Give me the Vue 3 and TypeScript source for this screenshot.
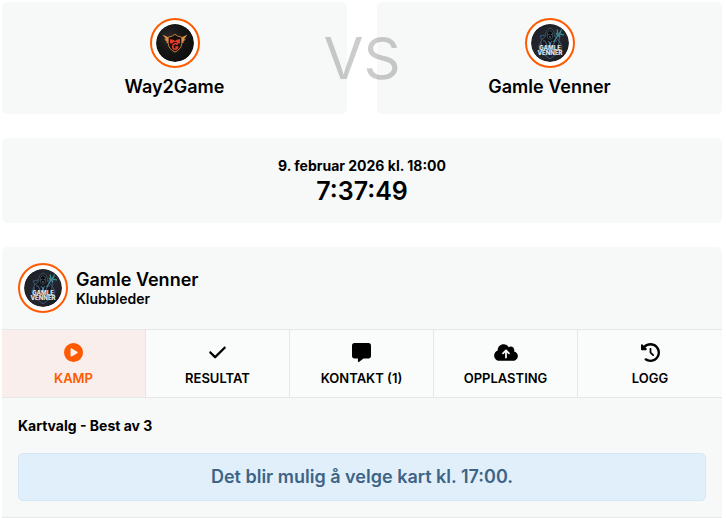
<script setup lang="ts">
import { ref } from 'vue'

interface Team {
  name: string
  logo: 'wings' | 'reaper'
}

interface Tab {
  id: string
  label: string
  viewBox: string
  width: number
  path: string
}

const teams: Team[] = [
  { name: 'Way2Game', logo: 'wings' },
  { name: 'Gamle Venner', logo: 'reaper' },
]

const tabs: Tab[] = [
  {
    id: 'kamp',
    label: 'Kamp',
    viewBox: '0 0 512 512',
    width: 19,
    path: 'M0 256a256 256 0 1 1 512 0A256 256 0 1 1 0 256zM188.3 147.1c-7.6 4.2-12.3 12.3-12.3 20.9V344c0 8.7 4.7 16.7 12.3 20.9s16.8 4.1 24.3-.5l144-88c7.1-4.4 11.5-12.1 11.5-20.5s-4.4-16.1-11.5-20.5l-144-88c-7.4-4.5-16.7-4.7-24.3-.5z',
  },
  {
    id: 'resultat',
    label: 'Resultat',
    viewBox: '0 0 448 512',
    width: 17,
    path: 'M438.6 105.4c12.5 12.5 12.5 32.8 0 45.3l-256 256c-12.5 12.5-32.8 12.5-45.3 0l-128-128c-12.5-12.5-12.5-32.8 0-45.3s32.8-12.5 45.3 0L160 338.7 393.4 105.4c12.5-12.5 32.8-12.5 45.3 0z',
  },
  {
    id: 'kontakt',
    label: 'Kontakt (1)',
    viewBox: '0 0 512 512',
    width: 19,
    path: 'M64 0C28.7 0 0 28.7 0 64V352c0 35.3 28.7 64 64 64h96v80c0 6.1 3.4 11.6 8.8 14.3s11.9 2.1 16.8-1.5L309.3 416H448c35.3 0 64-28.7 64-64V64c0-35.3-28.7-64-64-64H64z',
  },
  {
    id: 'opplasting',
    label: 'Opplasting',
    viewBox: '0 0 640 512',
    width: 24,
    path: 'M144 480C64.5 480 0 415.5 0 336c0-62.8 40.2-116.2 96.2-135.9c-.1-2.7-.2-5.4-.2-8.1c0-88.4 71.6-160 160-160c59.3 0 111 32.2 138.7 80.2C409.9 102 428.3 96 448 96c53 0 96 43 96 96c0 12.2-2.3 23.8-6.4 34.6C596 238.4 640 290.1 640 352c0 70.7-57.3 128-128 128H144zm79-217c-9.4 9.4-9.4 24.6 0 33.9s24.6 9.4 33.9 0l39-39V392c0 13.3 10.7 24 24 24s24-10.7 24-24V257.9l39 39c9.4 9.4 24.6 9.4 33.9 0s9.4-24.6 0-33.9l-80-80c-9.4-9.4-24.6-9.4-33.9 0l-80 80z',
  },
  {
    id: 'logg',
    label: 'Logg',
    viewBox: '0 0 512 512',
    width: 19,
    path: 'M75 75L41 41C25.9 25.9 0 36.6 0 57.9V168c0 13.3 10.7 24 24 24H134.1c21.4 0 32.1-25.9 17-41l-30.8-30.8C155 85.5 203 64 256 64c106 0 192 86 192 192s-86 192-192 192c-40.8 0-78.6-12.7-109.7-34.4c-14.5-10.1-34.4-6.6-44.6 7.9s-6.6 34.4 7.9 44.6C151.2 495 201.7 512 256 512c141.4 0 256-114.6 256-256S397.4 0 256 0C185.3 0 121.3 28.7 75 75zm181 53c-13.3 0-24 10.7-24 24V256c0 6.4 2.5 12.5 7 17l72 72c9.4 9.4 24.6 9.4 33.9 0s9.4-24.6 0-33.9l-65-65V152c0-13.3-10.7-24-24-24z',
  },
]

const activeTab = ref('kamp')
</script>

<template>
  <!-- Club emblems, shared by every avatar -->
  <svg class="sprite" aria-hidden="true">
    <defs>
      <radialGradient id="glow" cx="35%" cy="35%" r="75%">
        <stop offset="0" stop-color="#292929" />
        <stop offset="0.5" stop-color="#151515" />
        <stop offset="1" stop-color="#0e0e0f" />
      </radialGradient>
      <linearGradient id="night" x1="0" y1="0" x2="1" y2="1">
        <stop offset="0" stop-color="#1c2026" />
        <stop offset="0.55" stop-color="#24282e" />
        <stop offset="1" stop-color="#15171b" />
      </linearGradient>
      <symbol id="logo-wings" viewBox="0 0 38 38">
        <circle cx="19" cy="19" r="19" fill="url(#glow)" />
        <path d="M6.500 10.500 12.600 13.600v5.800l-3-1.500 1.600-.2-3-2.200 1.800-.2z" fill="#e0914a" />
        <path d="M31.500 10.500 25.400 13.600v5.800l3-1.500-1.600-.2 3-2.200-1.800-.2z" fill="#e0914a" />
        <path d="M19 10.300l2.600 1.700 4.200 1.200v6.400q-.6 5.600-6.800 8.500-6.200-2.900-6.800-8.500v-6.400l4.200-1.200z" fill="#130d0d" stroke="#c9803c" stroke-width="1" />
        <path d="M14 15l1.500.6h1.500l2 1.400 2-1.400h1.500L24 15v4.600h-2.400l-1.200-1.600h-2.800l-1.200 1.600H14z" fill="#e03a28" />
        <path d="M21.800 20.800q-1.200-1.500-3.100-1.100-2 .5-2 2.800 0 2.600 2.300 2.700 2.200 0 2.600-2.100h-2.300" fill="none" stroke="#f03a28" stroke-width="1.500" />
      </symbol>
      <symbol id="logo-reaper" viewBox="0 0 38 38">
        <circle cx="19" cy="19" r="19" fill="url(#night)" />
        <path d="M14 11 9 12l2 4-3 6 1 7 5 2 5 4 5-4 6-2 1-7-3-5 1-6-5 1" fill="none" stroke="#38577f" stroke-width="1" />
        <path d="M19 4c-4 2-4.500 5-4.200 8L10 17l1 9h16l1-9-4.700-5C23.500 8 22.500 5.500 19 4z" fill="#15191f" stroke="#536877" stroke-width="0.700" />
        <path d="M16.500 9q2.500-5 5 0v4.500L19 15.500l-2.500-2z" fill="#080a0e" stroke="#5f788b" stroke-width="0.500" />
        <path d="M17.400 10.700h1m1.300 0h1M18 13h2" stroke="#b9c7d0" stroke-width="0.600" />
        <path d="M12 17q2-1.500 3 2l2 4m9-6q-2-1.500-3 2l-2 4M17 17l2 3 2-3M19 18v5" fill="none" stroke="#536c84" stroke-width="0.900" />
        <path d="M22.500 18 30 7M26 5.500l1 4m3.500-4-1.700 4.500L33 11m-8-2 4 4" fill="none" stroke="#3f9499" stroke-width="1.100" />
        <path d="M18 18l2 1v3l-2-2z" fill="#4c83bd" />
        <text class="emblem-text" x="19" y="26">GAMLE</text>
        <text class="emblem-text" x="19" y="31">VENNER</text>
      </symbol>
    </defs>
  </svg>

  <main class="match">
    <section class="teams">
      <article v-for="team in teams" :key="team.name" class="card team">
        <svg class="avatar" viewBox="0 0 38 38" role="img" :aria-label="team.name">
          <use :href="`#logo-${team.logo}`" />
        </svg>
        <h2 class="name">{{ team.name }}</h2>
      </article>
      <span class="versus">VS</span>
    </section>

    <section class="card schedule">
      <time class="date" datetime="2026-02-09T18:00">9. februar 2026 kl. 18:00</time>
      <span class="countdown" role="timer">7:37:49</span>
    </section>

    <section class="card panel">
      <header class="leader">
        <svg class="avatar" viewBox="0 0 38 38" role="img" aria-label="Gamle Venner">
          <use href="#logo-reaper" />
        </svg>
        <div>
          <h2 class="name">Gamle Venner</h2>
          <p class="role">Klubbleder</p>
        </div>
      </header>

      <nav class="tabs">
        <button
          v-for="tab in tabs"
          :key="tab.id"
          type="button"
          class="tab"
          :class="{ active: activeTab === tab.id }"
          @click="activeTab = tab.id"
        >
          <svg class="tab-icon" :viewBox="tab.viewBox" :width="tab.width" height="19" aria-hidden="true">
            <path :d="tab.path" fill="currentColor" />
          </svg>
          <span>{{ tab.label }}</span>
        </button>
      </nav>

      <div class="maps">
        <h3 class="maps-title">Kartvalg - Best av 3</h3>
        <p class="notice">Det blir mulig å velge kart kl. 17:00.</p>
      </div>
    </section>
  </main>
</template>

<style>
body {
  margin: 0;
  background: #fff;
}
</style>

<style scoped>
.sprite {
  position: absolute;
  width: 0;
  height: 0;
}

.match {
  display: flex;
  flex-direction: column;
  gap: 24px;
  padding: 2px 4px 0 2px;
  color: #000;
  font-family: Inter, 'Liberation Sans', sans-serif;
}

h2,
h3,
p {
  margin: 0;
}

.card {
  border-radius: 5px;
  background: #f7f9f8;
}

.teams {
  position: relative;
  display: grid;
  grid-template-columns: 1fr 1fr;
  gap: 30px;
}

.team {
  display: flex;
  flex-direction: column;
  align-items: center;
  gap: 8px;
  padding: 16px;
}

.avatar {
  box-sizing: border-box;
  flex: none;
  width: 50px;
  height: 50px;
  padding: 4px;
  border: 2px solid #ff5a00;
  border-radius: 50%;
  background: #fff;
}

.emblem-text {
  fill: #e1e6ea;
  font-family: Inter, sans-serif;
  font-size: 6px;
  font-weight: 800;
  text-anchor: middle;
}

.name {
  font-size: 18px;
  font-weight: 600;
  line-height: 22px;
}

.versus {
  position: absolute;
  inset: 0;
  display: flex;
  align-items: center;
  justify-content: center;
  color: rgb(0 0 0 / 20%);
  font-size: 58px;
  font-weight: 400;
  line-height: 1;
}

.schedule {
  display: flex;
  flex-direction: column;
  align-items: center;
  padding: 18px 16px 16px;
}

.date {
  font-size: 14px;
  font-weight: 700;
  line-height: 20px;
}

.countdown {
  font-size: 25px;
  font-weight: 600;
  line-height: 31px;
}

.panel {
  border-bottom: 1px solid #e6e8e8;
  border-radius: 5px 5px 0 0;
}

.leader {
  display: flex;
  align-items: center;
  gap: 8px;
  padding: 16px;
}

.role {
  font-size: 14px;
  font-weight: 600;
  line-height: 16px;
}

.tabs {
  display: grid;
  grid-template-columns: repeat(5, 1fr);
  border: solid #e6e8e8;
  border-width: 1px 0;
}

.tab {
  display: flex;
  flex-direction: column;
  align-items: center;
  gap: 8px;
  padding: 13px 0 11px;
  border: 0;
  border-right: 1px solid #e6e8e8;
  background: #fafcfb;
  color: #000;
  font: 600 13px/16px Inter, 'Liberation Sans', sans-serif;
  text-transform: uppercase;
  cursor: pointer;
}

.tab:last-child {
  border-right: 0;
}

.tab.active {
  background: #f9eeec;
  color: #ff5a00;
}

.tab-icon {
  display: block;
}

.maps {
  padding: 18px 16px 16px;
}

.maps-title {
  margin-bottom: 17px;
  font-size: 14px;
  font-weight: 700;
  line-height: 20px;
}

.notice {
  padding: 11px 16px;
  border: 1px solid #d3e7f8;
  border-radius: 5px;
  background: #e1effb;
  color: #3d6486;
  font-size: 18px;
  font-weight: 600;
  line-height: 24px;
  text-align: center;
}
</style>
